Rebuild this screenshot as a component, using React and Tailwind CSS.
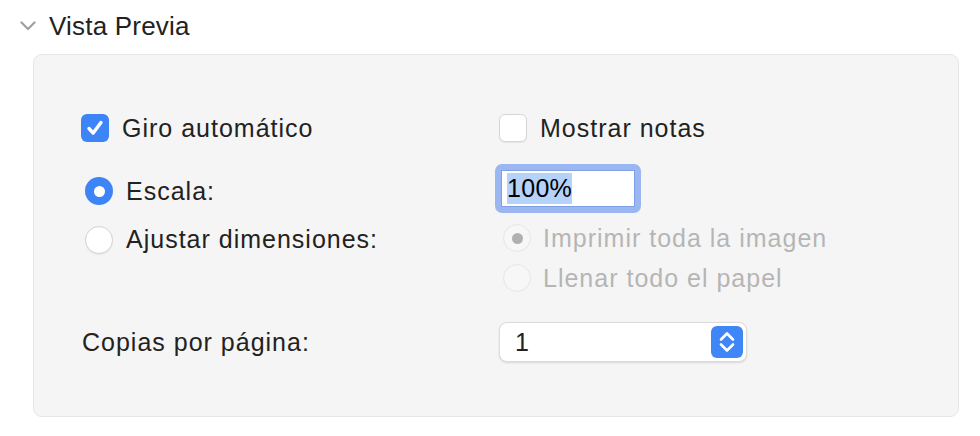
const font = { fontFamily: '"Liberation Sans", Arial, sans-serif' };

function Checkbox({ checked }) {
  return checked ? (
    <div className="w-[28px] h-[28px] rounded-[6px] bg-[#3d84f6] flex items-center justify-center shrink-0">
      <svg width="22" height="22" viewBox="0 0 22 22" fill="none">
        <path d="M5 11.5l4.2 4.6L17 5.5" stroke="white" strokeWidth="3.4" strokeLinecap="round" strokeLinejoin="round" />
      </svg>
    </div>
  ) : (
    <div className="w-[28px] h-[28px] rounded-[6px] bg-white border border-[#d6d6d6] shadow-[0_1px_1px_rgba(0,0,0,0.06)] shrink-0" />
  );
}

function Radio({ checked, disabled }) {
  if (checked)
    return (
      <div className="w-[28px] h-[28px] rounded-full bg-[#3d84f6] flex items-center justify-center shrink-0">
        <div className="w-[11px] h-[11px] rounded-full bg-white" />
      </div>
    );
  return (
    <div
      className={`w-[28px] h-[28px] rounded-full border shrink-0 flex items-center justify-center ${
        disabled ? "bg-[#f7f7f7] border-[#e6e6e6]" : "bg-white border-[#d3d3d3] shadow-[0_1px_1px_rgba(0,0,0,0.06)]"
      }`}
    >
      {disabled === "dot" && <div className="w-[11px] h-[11px] rounded-full bg-[#b0b0b0]" />}
    </div>
  );
}

export default function App() {
  return (
    <div className="w-[980px] h-[436px] bg-white overflow-hidden text-[#222]" style={font}>
      <div className="flex items-center h-[28px] mt-[12px] pl-[20px]">
        <svg width="16" height="10" viewBox="0 0 16 10" fill="none">
          <path d="M1.5 1.5l6.5 6.5 6.5-6.5" stroke="#a0a0a0" strokeWidth="2.2" strokeLinecap="round" strokeLinejoin="round" />
        </svg>
        <span className="ml-[13px] text-[26px] leading-[28px] text-[#222] tracking-[0.2px]">Vista Previa</span>
      </div>

      <div className="ml-[33px] mt-[14px] w-[926px] h-[363px] rounded-[9px] bg-[#f5f5f5] border border-[#e6e6e6] pl-[47px] pt-[59px] text-[25px] leading-[28px] tracking-[1px]">
        <div className="grid grid-cols-[418px_1fr] grid-rows-[28px] items-center">
          <div className="flex items-center gap-[13px]">
            <Checkbox checked />
            <span className="pb-[1px]">Giro automático</span>
          </div>
          <div className="flex items-center gap-[13px]">
            <Checkbox />
            <span className="pb-[1px]">Mostrar notas</span>
          </div>
        </div>

        <div className="grid grid-cols-[418px_1fr] grid-rows-[49px] items-center mt-[22px]">
          <div className="flex items-center gap-[13px] pl-[4px] pt-[5px]">
            <Radio checked />
            <span className="pb-[1px]">Escala:</span>
          </div>
          <div className="-ml-[4px] w-[146px] h-[49px] rounded-[7px] bg-[#9ab7f1] p-[6px]">
            <div className="w-full h-full bg-white border border-[#7f9fe6] flex items-center pl-[5px]">
              <span className="bg-[#b4d2fa] text-black leading-[31px] tracking-[0.3px]">100%</span>
            </div>
          </div>
        </div>

        <div className="grid grid-cols-[418px_1fr] grid-rows-[28px] items-center mt-[11px]">
          <div className="flex items-center gap-[13px] pl-[4px] pt-[3px]">
            <Radio />
            <span className="pb-[1px]">Ajustar dimensiones:</span>
          </div>
          <div className="flex items-center gap-[12px] pl-[4px] text-[#b5b5b5]">
            <Radio disabled="dot" />
            <span className="pb-[1px]">Imprimir toda la imagen</span>
          </div>
        </div>

        <div className="grid grid-cols-[418px_1fr] grid-rows-[28px] items-center mt-[12px]">
          <div />
          <div className="flex items-center gap-[12px] pl-[4px] text-[#b5b5b5]">
            <Radio disabled />
            <span className="pb-[1px]">Llenar todo el papel</span>
          </div>
        </div>

        <div className="grid grid-cols-[418px_1fr] grid-rows-[40px] items-center mt-[30px]">
          <div className="pl-[1px]">Copias por página:</div>
          <div className="w-[248px] h-[40px] rounded-[8px] bg-white border border-[#dcdcdc] shadow-[0_1px_2px_rgba(0,0,0,0.12)] flex items-center justify-between pl-[15px] pr-[3px]">
            <span>1</span>
            <div className="w-[32px] h-[32px] rounded-[6px] bg-[#3f86f6] flex items-center justify-center">
              <svg width="16" height="24" viewBox="0 0 16 24" fill="none">
                <path d="M2 9.5l6-6 6 6" stroke="white" strokeWidth="2.6" strokeLinecap="round" strokeLinejoin="round" />
                <path d="M2 14.5l6 6 6-6" stroke="white" strokeWidth="2.6" strokeLinecap="round" strokeLinejoin="round" />
              </svg>
            </div>
          </div>
        </div>
      </div>
    </div>
  );
}
